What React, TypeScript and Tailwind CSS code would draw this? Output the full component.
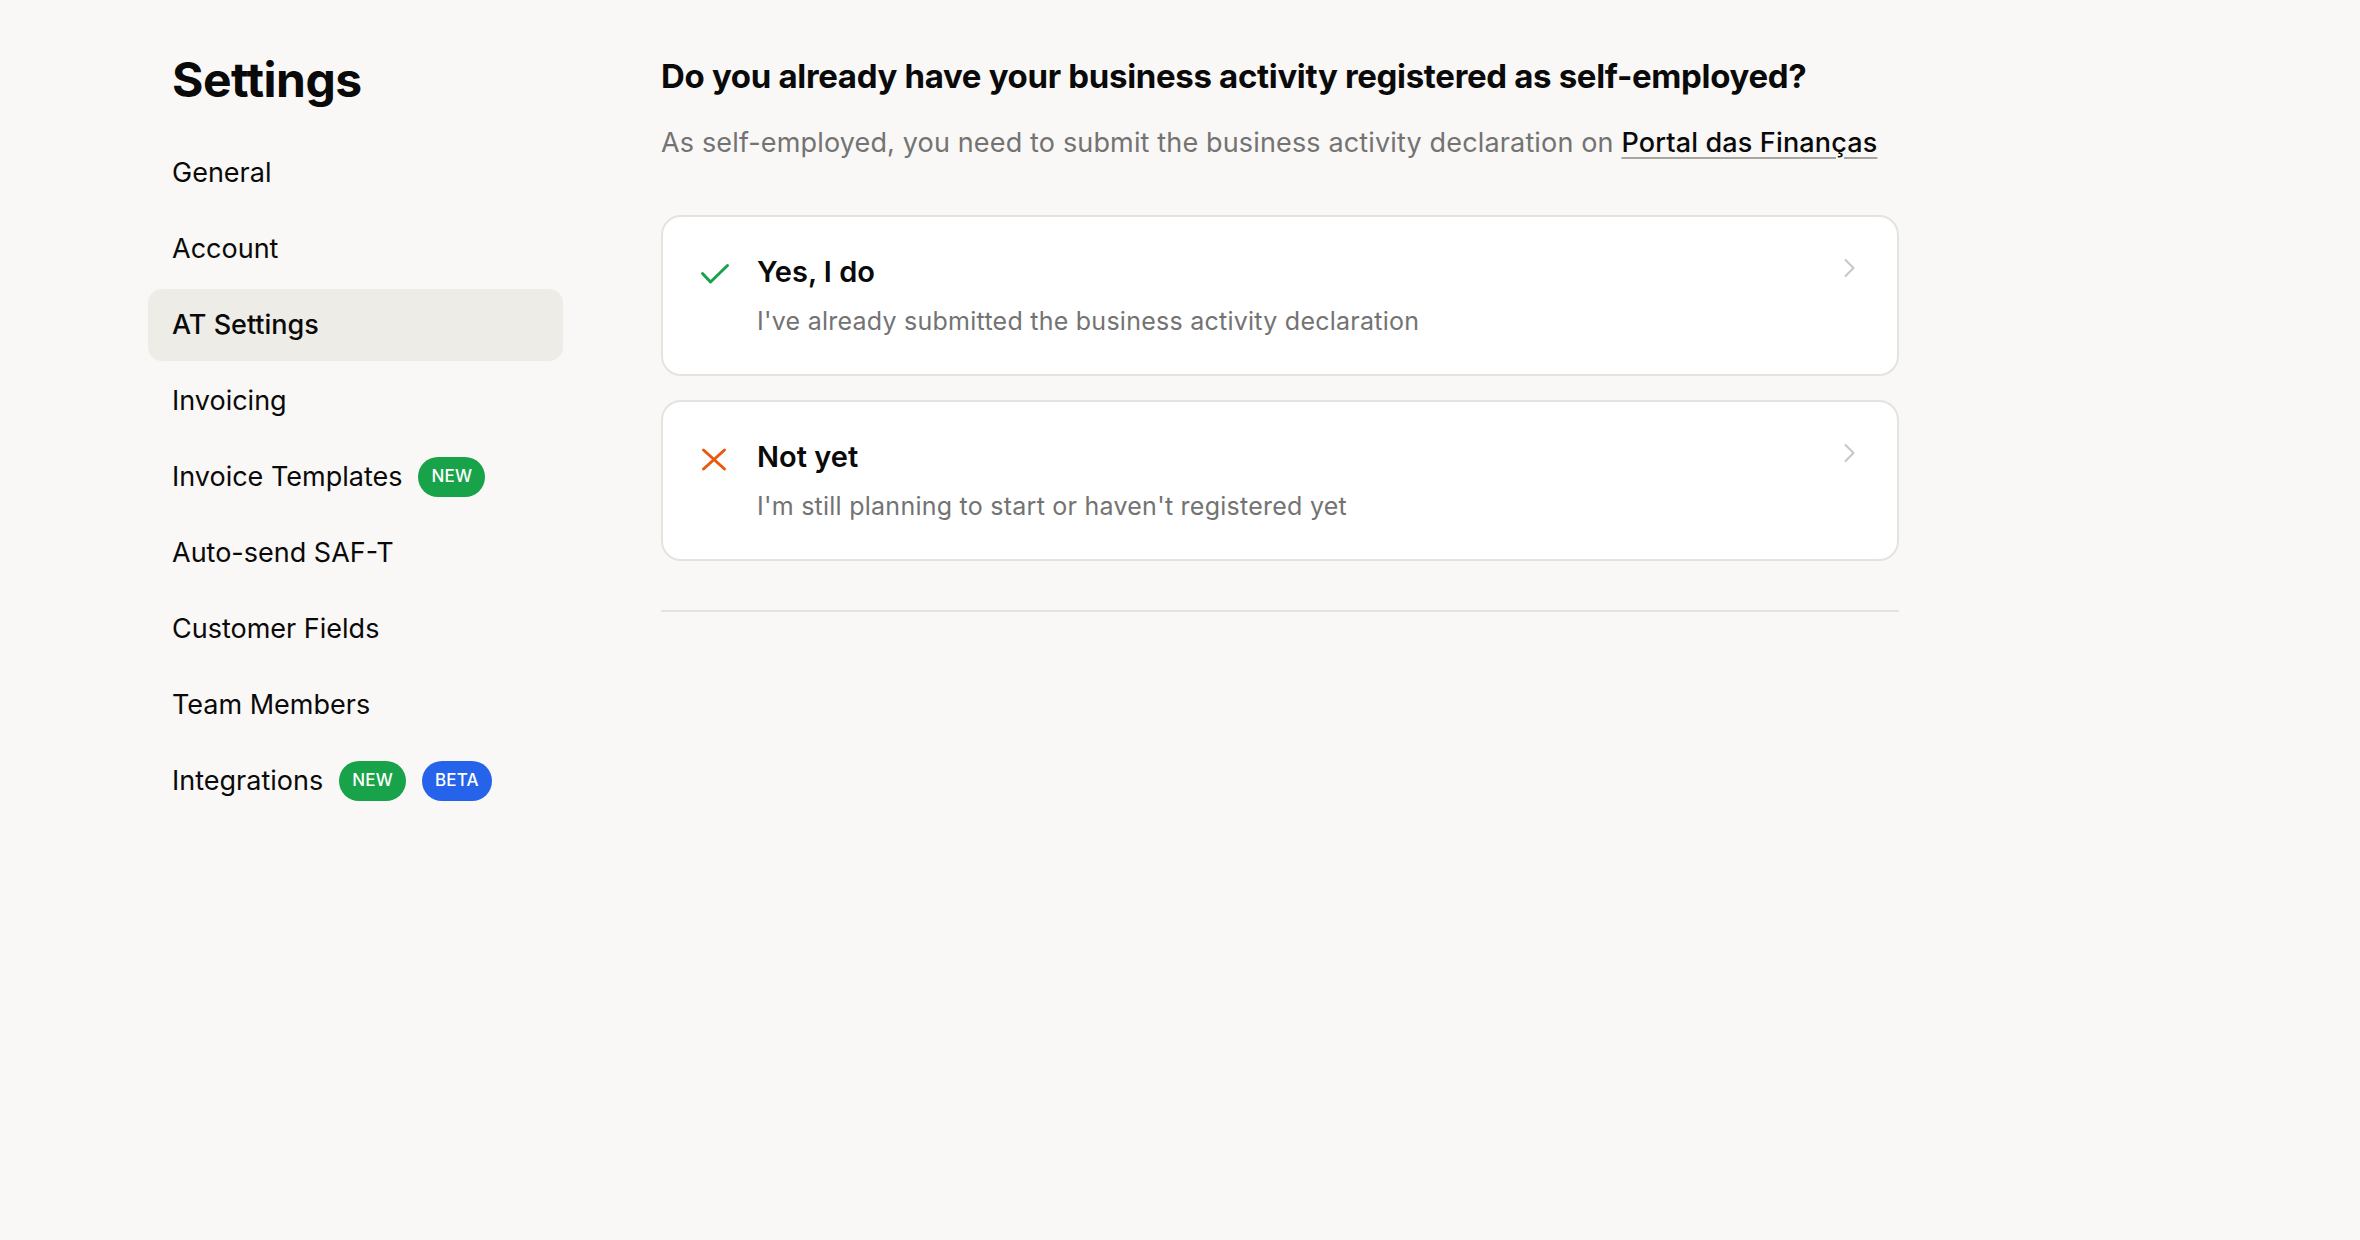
import { ReactNode } from "react";

type NavItem = {
    label: string;
    active?: boolean;
    badges?: ("new" | "beta")[];
};

const navItems: NavItem[] = [
    { label: "General" },
    { label: "Account" },
    { label: "AT Settings", active: true },
    { label: "Invoicing" },
    { label: "Invoice Templates", badges: ["new"] },
    { label: "Auto-send SAF-T" },
    { label: "Customer Fields" },
    { label: "Team Members" },
    { label: "Integrations", badges: ["new", "beta"] },
];

const Badge = ({ kind }: { kind: "new" | "beta" }) => {
    const color = kind === "new" ? "bg-[#18a34a]" : "bg-[#2563eb]";
    return (
        <span className={`${color} inline-flex h-[40px] items-center rounded-full px-[13px] text-[17px] font-medium tracking-[0.2px] text-white`}>
            {kind === "new" ? "NEW" : "BETA"}
        </span>
    );
};

const CheckIcon = () => (
    <svg width="42" height="42" viewBox="0 0 42 42" fill="none">
        <polyline points="8.5 19.5 16.5 28 33.5 11.5" stroke="#16a34a" strokeWidth="3" strokeLinecap="round" strokeLinejoin="round" />
    </svg>
);

const CrossIcon = () => (
    <svg width="42" height="42" viewBox="0 0 42 42" fill="none">
        <path d="M9.5 11 30.5 30M30.5 11 9.5 30" stroke="#ea580c" strokeWidth="3" strokeLinecap="round" />
    </svg>
);

const Chevron = () => (
    <svg width="14" height="20" viewBox="0 0 14 20" fill="none" className="mt-[4px] shrink-0">
        <path d="M3.5 2 11.5 10 3.5 18" stroke="#c7c6c3" strokeWidth="2" strokeLinecap="round" strokeLinejoin="round" />
    </svg>
);

const OptionCard = ({ icon, title, text }: { icon: ReactNode; title: string; text: string }) => (
    <button className="flex w-full items-start rounded-[20px] border-2 border-[#e4e3e0] bg-white pl-[31px] pr-[41px] pt-[37px] pb-[35px] text-left">
        <div className="shrink-0">{icon}</div>
        <div className="ml-[21px] flex-1">
            <div className="text-[29px] leading-[36px] font-semibold text-[#0a0a0a]">{title}</div>
            <div className="mt-[13px] text-[25px] leading-[36px] tracking-[0.25px] text-[#737373]">{text}</div>
        </div>
        <Chevron />
    </button>
);

export default function App() {
    return (
        <div className="min-h-screen bg-[#f9f8f6] font-['Inter',sans-serif] text-[#0a0a0a]">
            <div className="flex gap-[98px] pl-[148px] pt-[56px]">
                <aside className="w-[415px] shrink-0">
                    <h1 className="px-6 text-[48px] leading-[48px] font-bold tracking-[-0.5px]">Settings</h1>
                    <nav className="mt-[33px] flex flex-col gap-[4px]">
                        {navItems.map((item) => (
                            <a
                                key={item.label}
                                className={`flex h-[72px] items-center gap-[16px] rounded-[14px] px-6 text-[27px] ${item.active ? "bg-[#edece6] font-medium" : ""}`}
                            >
                                <span>{item.label}</span>
                                {item.badges?.map((b) => <Badge key={b} kind={b} />)}
                            </a>
                        ))}
                    </nav>
                </aside>

                <main className="w-[1238px] shrink-0">
                    <h2 className="text-[33px] leading-[40px] font-bold tracking-[-0.33px]">
                        Do you already have your business activity registered as self-employed?
                    </h2>
                    <p className="mt-[29px] text-[27px] leading-[36px] tracking-[0.15px] text-[#737373]">
                        As self-employed, you need to submit the business activity declaration on{" "}
                        <a className="font-medium text-[#0a0a0a] underline decoration-[#a8a6a1] decoration-2 underline-offset-[5px]">
                            Portal das Finanças
                        </a>
                    </p>

                    <div className="mt-[54px] flex flex-col gap-[24px]">
                        <OptionCard
                            icon={<CheckIcon />}
                            title="Yes, I do"
                            text="I've already submitted the business activity declaration"
                        />
                        <OptionCard
                            icon={<CrossIcon />}
                            title="Not yet"
                            text="I'm still planning to start or haven't registered yet"
                        />
                    </div>

                    <hr className="mt-[49px] border-t-2 border-[#e4e3e0]" />
                </main>
            </div>
        </div>
    );
}
